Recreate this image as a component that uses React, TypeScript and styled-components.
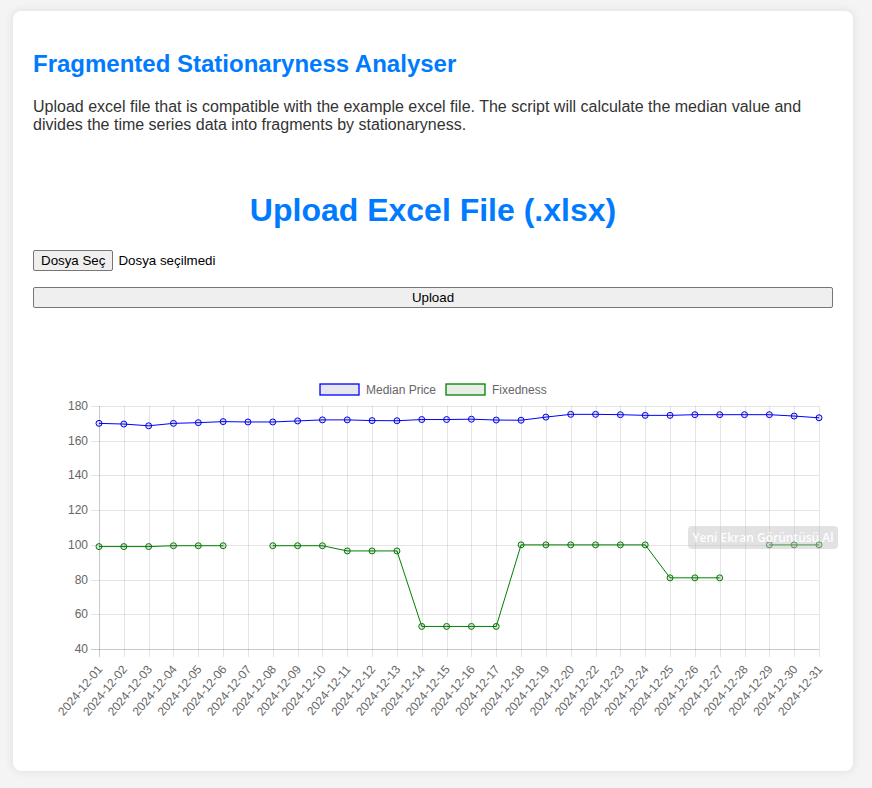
import React from "react";
import styled, { createGlobalStyle } from "styled-components";

const GlobalStyle = createGlobalStyle`
  html, body { margin: 0; padding: 0; background: #f4f4f4; }
  body { font-family: "Liberation Sans", Arial, sans-serif; }
`;

const Page = styled.div`
  padding: 11px 0 17px 13px;
`;

const Card = styled.div`
  position: relative;
  width: 840px;
  box-sizing: border-box;
  padding: 20px;
  background: #fff;
  border-radius: 8px;
  box-shadow: 0 0 10px rgba(0, 0, 0, 0.1);
`;

const Title = styled.h2`
  margin: 19px 0 20px;
  font-size: 24px;
  font-weight: bold;
  color: #007bff;
  line-height: normal;
`;

const Intro = styled.p`
  margin: 0;
  font-size: 16px;
  color: #333;
  line-height: normal;
`;

const UploadHeading = styled.h1`
  margin: 58px 0 0;
  font-size: 32px;
  font-weight: bold;
  color: #007bff;
  text-align: center;
  line-height: normal;
`;

const FileRow = styled.div`
  display: flex;
  align-items: center;
  gap: 5px;
  margin-top: 21px;
  height: 21px;
  font-size: 13.33px;
  color: #000;
`;

const NativeButton = styled.button<{ $wide?: boolean }>`
  box-sizing: border-box;
  height: 21px;
  padding: 0 7px;
  width: ${(p) => (p.$wide ? "100%" : "auto")};
  font-family: "Liberation Sans", Arial, sans-serif;
  font-size: 13.33px;
  color: #000;
  background: #efefef;
  border: 1px solid #767676;
  border-radius: 2px;
`;

const UploadRow = styled.div`
  margin-top: 16px;
  display: flex;
`;

const ChartWrap = styled.div`
  margin-top: 42px;
  height: 401px;
`;

const Overlay = styled.div`
  position: absolute;
  left: 675px;
  top: 515px;
  width: 150px;
  height: 23px;
  display: flex;
  align-items: center;
  justify-content: center;
  border-radius: 4px;
  background: rgba(190, 190, 190, 0.45);
  color: rgba(255, 255, 255, 0.97);
  font-family: "Open Sans", "Noto Sans", sans-serif;
  font-size: 12px;
  font-weight: 600;
  white-space: nowrap;
`;

const labels = [
  "01","02","03","04","05","06","07","08","09","10","11","12","13","14","15",
  "16","17","18","19","20","22","23","24","25","26","27","28","29","30","31",
].map((d) => `2024-12-${d}`);

const median = [
  170, 169.6, 168.6, 170, 170.4, 171, 170.8, 170.8, 171.4, 172, 172, 171.6, 171.5,
  172.2, 172.2, 172.4, 171.9, 171.8, 173.6, 175.2, 175.2, 175, 174.6, 174.6, 175,
  175, 175, 175, 174.2, 173.2,
];

const fixed: (number | null)[] = [
  99, 99, 99, 99.5, 99.5, 99.5, null, 99.5, 99.5, 99.5, 96.5, 96.5, 96.5, 53, 53,
  53, 53, 100, 100, 100, 100, 100, 100, 81, 81, 81, null, 100, 100, 100,
];

const L = 66;
const R = 786;
const T = 56;
const B = 299;
const xs = (i: number) => L + (i * (R - L)) / (labels.length - 1);
const ys = (v: number) => T + ((180 - v) * (B - T)) / 140;

function segments(data: (number | null)[]) {
  const segs: string[] = [];
  let cur: string[] = [];
  data.forEach((v, i) => {
    if (v === null) {
      if (cur.length) segs.push(cur.join(" "));
      cur = [];
    } else {
      cur.push(`${cur.length ? "L" : "M"}${xs(i).toFixed(2)},${ys(v).toFixed(2)}`);
    }
  });
  if (cur.length) segs.push(cur.join(" "));
  return segs;
}

const Chart: React.FC = () => {
  const yTicks = [180, 160, 140, 120, 100, 80, 60, 40];
  return (
    <svg width={800} height={401} viewBox="0 0 800 401" style={{ display: "block" }}>
      <rect x={287} y={34} width={39} height={11} fill="#e6e6ee" stroke="blue" strokeWidth={1.3} />
      <rect x={413} y={34} width={39} height={11} fill="#e6eee6" stroke="green" strokeWidth={1.3} />
      <g fontFamily="Liberation Sans, Arial, sans-serif" fontSize={12} fill="#666">
        <text x={333} y={39.5} dominantBaseline="central">Median Price</text>
        <text x={459} y={39.5} dominantBaseline="central">Fixedness</text>
      </g>
      <g stroke="rgba(0,0,0,0.1)" strokeWidth={1} shapeRendering="crispEdges">
        {yTicks.map((v) => (
          <line key={v} x1={L - 8} x2={R} y1={Math.round(ys(v)) + 0.5} y2={Math.round(ys(v)) + 0.5} />
        ))}
        {labels.map((_, i) => (
          <line key={i} x1={Math.round(xs(i)) + 0.5} x2={Math.round(xs(i)) + 0.5} y1={T} y2={B + 8} />
        ))}
        <line x1={L + 0.5} x2={L + 0.5} y1={T} y2={B + 8} stroke="rgba(0,0,0,0.12)" />
        <line x1={L - 8} x2={R} y1={B + 0.5} y2={B + 0.5} stroke="rgba(0,0,0,0.12)" />
      </g>
      <g fontFamily="Liberation Sans, Arial, sans-serif" fontSize={12} fill="#666">
        {yTicks.map((v) => (
          <text key={v} x={L - 11} y={ys(v)} textAnchor="end" dominantBaseline="central">
            {v}
          </text>
        ))}
        {labels.map((l, i) => {
          const x = xs(i) + 1;
          const y = B + 18;
          return (
            <text
              key={l}
              x={x}
              y={y}
              textAnchor="end"
              dominantBaseline="central"
              transform={`rotate(-50 ${x} ${y})`}
            >
              {l}
            </text>
          );
        })}
      </g>
      {segments(median).map((d, k) => (
        <path key={`m${k}`} d={d} fill="none" stroke="blue" strokeWidth={1} />
      ))}
      {segments(fixed).map((d, k) => (
        <path key={`f${k}`} d={d} fill="none" stroke="green" strokeWidth={1} />
      ))}
      {median.map((v, i) => (
        <circle key={`mp${i}`} cx={xs(i)} cy={ys(v)} r={3} fill="rgba(0,0,0,0.1)" stroke="blue" strokeWidth={1} />
      ))}
      {fixed.map((v, i) =>
        v === null ? null : (
          <circle key={`fp${i}`} cx={xs(i)} cy={ys(v)} r={3} fill="rgba(0,0,0,0.1)" stroke="green" strokeWidth={1} />
        )
      )}
    </svg>
  );
};

export default function App() {
  return (
    <Page>
      <GlobalStyle />
      <Card>
        <Title>Fragmented Stationaryness Analyser</Title>
        <Intro>
          Upload excel file that is compatible with the example excel file. The script will calculate the
          median value and divides the time series data into fragments by stationaryness.
        </Intro>
        <UploadHeading>Upload Excel File (.xlsx)</UploadHeading>
        <FileRow>
          <NativeButton type="button">Dosya Seç</NativeButton>
          <span>Dosya seçilmedi</span>
        </FileRow>
        <UploadRow>
          <NativeButton type="button" $wide>
            Upload
          </NativeButton>
        </UploadRow>
        <ChartWrap>
          <Chart />
        </ChartWrap>
        <Overlay>Yeni Ekran Görüntüsü Al</Overlay>
      </Card>
    </Page>
  );
}
